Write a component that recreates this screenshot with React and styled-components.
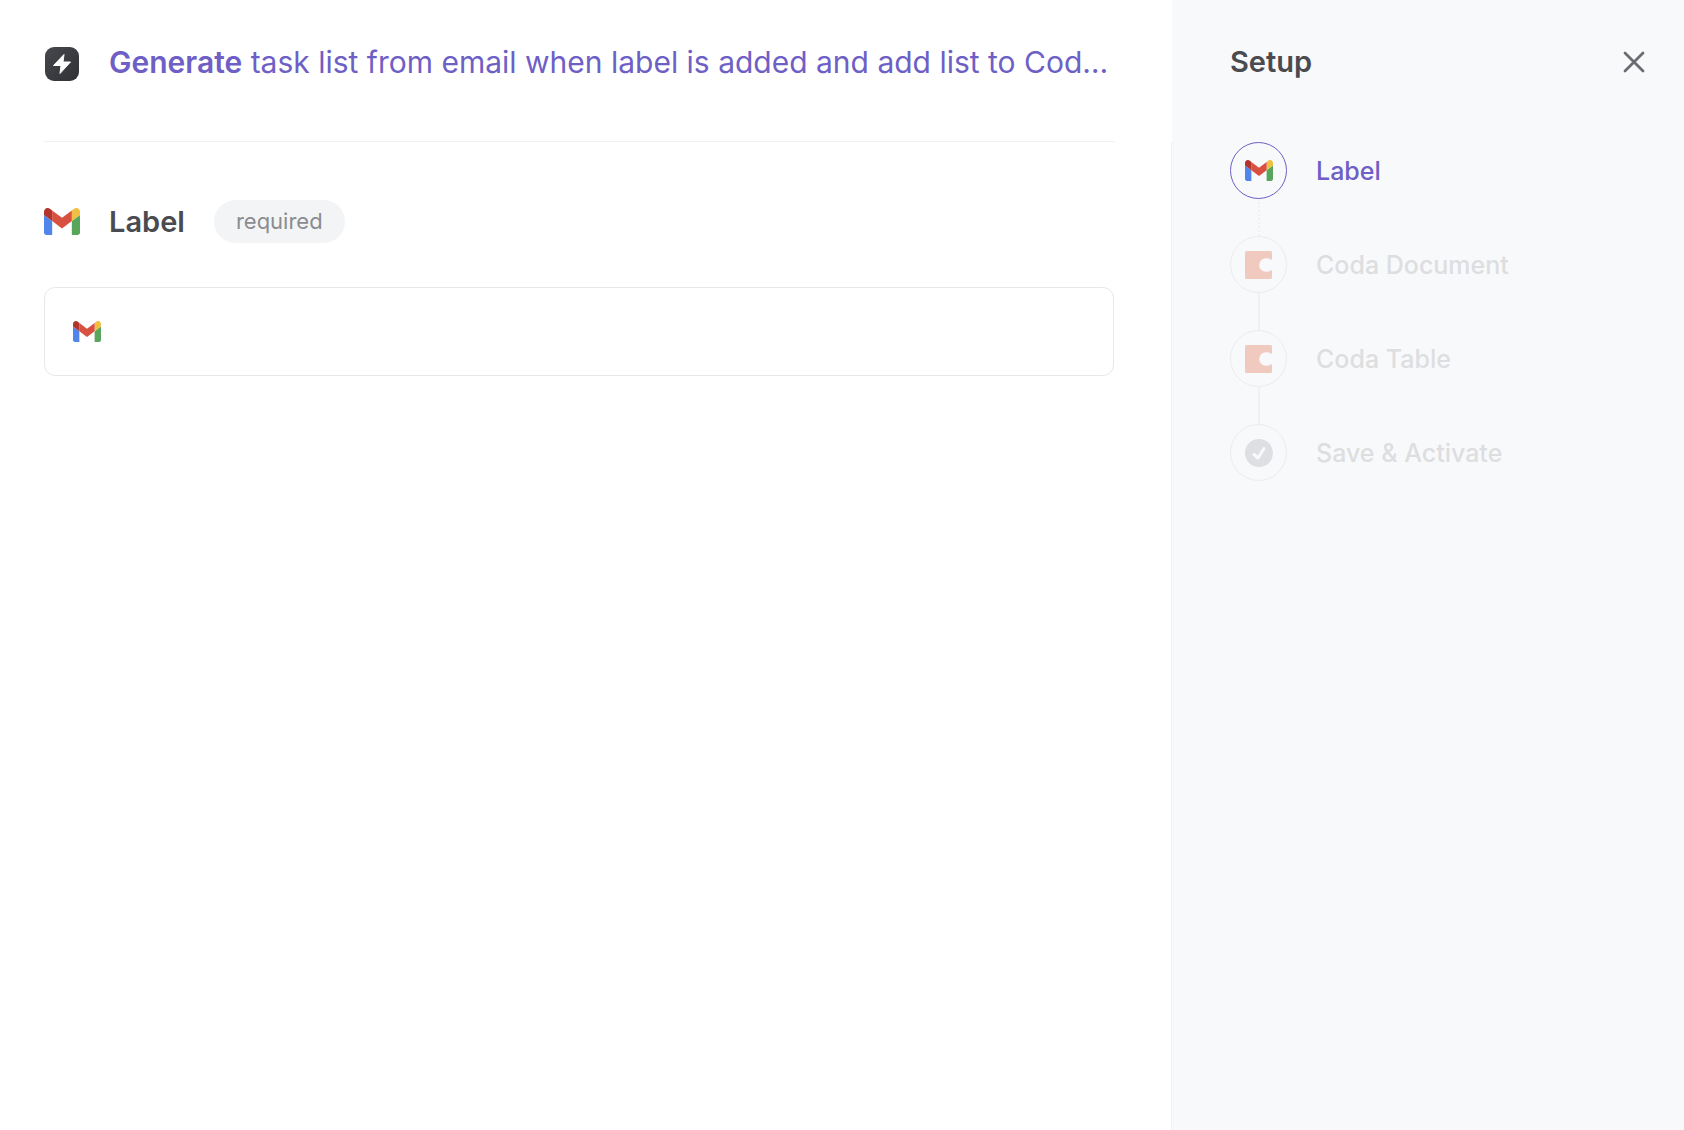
import styled, { createGlobalStyle } from 'styled-components'

const C = {
    purple: '#6e5fc6',
    dark: '#4a4b50',
    gray: '#8b8c90',
    faded: '#dddee0',
    line: '#f0f1f2',
    border: '#e8e8e9',
    ring: '#ebecee',
    pill: '#f3f4f6',
    side: '#f8f9fb',
}

const Global = createGlobalStyle`
    * {
        box-sizing: border-box;
    }
    body {
        margin: 0;
        background: #fff;
        font-family: Inter, sans-serif;
        font-optical-sizing: none;
        -webkit-font-smoothing: antialiased;
    }
    button, input {
        font: inherit;
        color: inherit;
        border: 0;
        padding: 0;
        background: none;
    }
    svg {
        display: block;
        flex: none;
    }
`

const Page = styled.div`
    min-height: 100vh;
    display: grid;
    grid-template-columns: minmax(0, 1fr) 512px;
`

const Main = styled.main`
    display: flex;
    flex-direction: column;
`

const Header = styled.header`
    display: flex;
    align-items: flex-end;
    gap: 29px;
    margin: 0 57px 0 44px;
    padding: 42px 0 59px;
    border-bottom: 1px solid ${C.line};
`

const Recipe = styled.h1`
    margin: 0;
    min-width: 0;
    font-size: 30px;
    line-height: 40px;
    font-weight: 400;
    color: ${C.purple};
    white-space: nowrap;
    overflow: hidden;
    text-overflow: ellipsis;
    b {
        font-weight: 600;
    }
`

const Body = styled.section`
    flex: 1;
    padding: 58px 57px 58px 44px;
    border-right: 1px solid ${C.line};
`

const FieldHead = styled.div`
    display: flex;
    align-items: center;
    gap: 29px;
`

const FieldName = styled.label`
    font-size: 29px;
    line-height: 40px;
    font-weight: 600;
    color: ${C.dark};
`

const Pill = styled.span`
    padding: 0 22px;
    border-radius: 22px;
    font-size: 22px;
    line-height: 43px;
    color: ${C.gray};
    background: ${C.pill};
`

const Field = styled.div`
    display: flex;
    align-items: center;
    gap: 22px;
    height: 89px;
    margin-top: 44px;
    padding: 0 28px;
    border: 1px solid ${C.border};
    border-radius: 11px;
`

const FieldInput = styled.input`
    flex: 1;
    min-width: 0;
    height: 44px;
    font-size: 25px;
    color: ${C.dark};
    outline: none;
`

const Side = styled.aside`
    padding: 42px 39px 58px 58px;
    background: ${C.side};
`

const SideHead = styled.div`
    display: flex;
    align-items: center;
    justify-content: space-between;
    margin-bottom: 60px;
`

const SideTitle = styled.h2`
    margin: 0;
    font-size: 29px;
    line-height: 40px;
    font-weight: 600;
    color: ${C.dark};
`

const CloseButton = styled.button`
    cursor: pointer;
`

const Steps = styled.ol`
    margin: 0;
    padding: 0;
    list-style: none;
`

const Connector = styled.div`
    width: 0;
    height: 37px;
    margin-left: 28px;
    border-left: 2px ${({ $dotted }) => ($dotted ? 'dotted' : 'solid')} ${C.line};
`

const Step = styled.li`
    &:last-child ${Connector} {
        display: none;
    }
`

const StepButton = styled.button`
    display: flex;
    align-items: center;
    gap: 29px;
    font-size: 25px;
    line-height: 36px;
    font-weight: 500;
    color: ${({ $active }) => ($active ? C.purple : C.faded)};
    cursor: pointer;
`

const Circle = styled.span`
    display: grid;
    place-items: center;
    width: 57px;
    height: 57px;
    border: 1px solid ${({ $active }) => ($active ? C.purple : C.ring)};
    border-radius: 50%;
`

const Gmail = ({ width }) => (
    <svg width={width} viewBox="52 42 88 66" aria-hidden="true">
        <path fill="#5086ec" d="M58 108h14V74L52 59v43c0 3.3 2.7 6 6 6" />
        <path fill="#58a55c" d="M120 108h14c3.3 0 6-2.7 6-6V59l-20 15" />
        <path fill="#f1bf42" d="M120 48v26l20-15v-8c0-7.4-8.5-11.7-14.4-7.2" />
        <path fill="#d85140" d="M72 74V48l24 18 24-18v26L96 92" />
        <path fill="#b3342b" d="M52 51v8l20 15V48l-5.6-4.2c-5.9-4.5-14.4-.2-14.4 7.2" />
    </svg>
)

const Coda = () => (
    <svg width="27" height="28" viewBox="0 0 27 28" aria-hidden="true">
        <path
            fill="#f1cabf"
            d="M1.5 0h24A1.5 1.5 0 0 1 27 1.5V8c0 .8-.7 1-1.3.6C24.5 7.700 23 7.200 21 7.200a6.800 6.800 0 0 0 0 13.600c2 0 3.500-.5 4.700-1.400.6-.4 1.300-.2 1.300.6v6.500a1.500 1.500 0 0 1-1.500 1.500h-24A1.500 1.500 0 0 1 0 26.500v-25A1.500 1.500 0 0 1 1.500 0z"
        />
    </svg>
)

const Check = () => (
    <svg width="28" height="28" viewBox="0 0 28 28" aria-hidden="true">
        <circle cx="14" cy="14" r="14" fill="#dddfe3" />
        <path d="M9 15.500l4 3.500 6-9.500" fill="none" stroke={C.side} strokeWidth="3" strokeLinecap="round" strokeLinejoin="round" />
    </svg>
)

const Bolt = () => (
    <svg width="36" height="36" viewBox="0 0 36 36" aria-hidden="true">
        <defs>
            <linearGradient id="bolt" x1="0" y1="0" x2="1" y2="1">
                <stop offset="0" stopColor="#47484d" />
                <stop offset="1" stopColor="#303135" />
            </linearGradient>
        </defs>
        <rect x="1" y="1" width="34" height="34" rx="9" fill="url(#bolt)" />
        <path d="M20 8.500L9.500 19.500H17l-1 8L26.500 16H19z" fill="#fff" stroke="#fff" strokeLinejoin="round" />
    </svg>
)

const Close = () => (
    <svg width="22" height="22" viewBox="0 0 22 22" aria-hidden="true">
        <path d="M2 2l18 18M20 2L2 20" stroke="#6b6c72" strokeWidth="2.800" strokeLinecap="round" />
    </svg>
)

const StepIcon = ({ icon }) => {
    if (icon === 'gmail') return <Gmail width={28} />
    if (icon === 'coda') return <Coda />
    return <Check />
}

const steps = [
    { name: 'Label', icon: 'gmail', active: true },
    { name: 'Coda Document', icon: 'coda' },
    { name: 'Coda Table', icon: 'coda' },
    { name: 'Save & Activate', icon: 'check' },
]

const App = () => {
    return (
        <Page>
            <Global />
            <Main>
                <Header>
                    <Bolt />
                    <Recipe><b>Generate</b> task list from email when label is added and add list to Cod…</Recipe>
                </Header>
                <Body>
                    <FieldHead>
                        <Gmail width={36} />
                        <FieldName htmlFor="label">Label</FieldName>
                        <Pill>required</Pill>
                    </FieldHead>
                    <Field>
                        <Gmail width={28} />
                        <FieldInput id="label" type="text" required />
                    </Field>
                </Body>
            </Main>
            <Side>
                <SideHead>
                    <SideTitle>Setup</SideTitle>
                    <CloseButton type="button" aria-label="Close"><Close /></CloseButton>
                </SideHead>
                <Steps>
                    {steps.map((step) => (
                        <Step key={step.name}>
                            <StepButton type="button" $active={step.active}>
                                <Circle $active={step.active}><StepIcon icon={step.icon} /></Circle>
                                {step.name}
                            </StepButton>
                            <Connector $dotted={step.active} />
                        </Step>
                    ))}
                </Steps>
            </Side>
        </Page>
    )
}

export default App
